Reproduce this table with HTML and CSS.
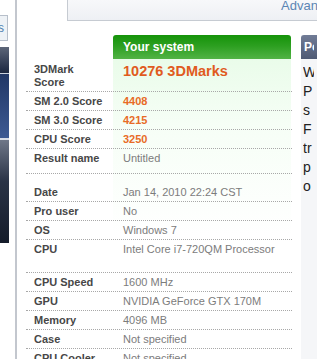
FILE: index.html
```html
<!DOCTYPE html>
<html>
<head>
<meta charset="utf-8">
<link rel="stylesheet" href="styles.css">
</head>
<body>
<div class="page">
  <div class="leftnav">
    <div class="navtab"><span>Results</span></div>
    <div class="navpanel">
      <div class="np-top"></div>
      <div class="np-mid"></div>
      <div class="np-bot"></div>
    </div>
  </div>
  <div class="main">
    <div class="topbar"><span class="toplink">Advanced search</span></div>
    <div class="content">
      <div class="results">
        <div class="row head">
          <div class="lab"></div>
          <div class="val"><div class="green">Your system</div></div>
        </div>
        <div class="row first">
          <div class="lab">3DMark<br>Score</div>
          <div class="val big">10276 3DMarks</div>
        </div>
        <div class="row">
          <div class="lab">SM 2.0 Score</div>
          <div class="val score">4408</div>
        </div>
        <div class="row">
          <div class="lab">SM 3.0 Score</div>
          <div class="val score">4215</div>
        </div>
        <div class="row">
          <div class="lab">CPU Score</div>
          <div class="val score">3250</div>
        </div>
        <div class="row resname">
          <div class="lab">Result name</div>
          <div class="val">Untitled</div>
        </div>
        <div class="row date">
          <div class="lab">Date</div>
          <div class="val">Jan 14, 2010 22:24 CST</div>
        </div>
        <div class="row">
          <div class="lab">Pro user</div>
          <div class="val">No</div>
        </div>
        <div class="row">
          <div class="lab">OS</div>
          <div class="val">Windows 7</div>
        </div>
        <div class="row cpu">
          <div class="lab">CPU</div>
          <div class="val">Intel Core i7-720QM Processor</div>
        </div>
        <div class="row">
          <div class="lab">CPU Speed</div>
          <div class="val">1600 MHz</div>
        </div>
        <div class="row">
          <div class="lab">GPU</div>
          <div class="val">NVIDIA GeForce GTX 170M</div>
        </div>
        <div class="row">
          <div class="lab">Memory</div>
          <div class="val">4096 MB</div>
        </div>
        <div class="row">
          <div class="lab">Case</div>
          <div class="val">Not specified</div>
        </div>
        <div class="row">
          <div class="lab">CPU Cooler</div>
          <div class="val">Not specified</div>
        </div>
      </div>
      <div class="side">
        <div class="side-head"><span class="head-text">Popular</span></div>
        <div class="side-body">
          <div class="line">What is</div>
          <div class="line">P results</div>
          <div class="line">s scores</div>
          <div class="line">F marks</div>
          <div class="line">tr scores</div>
          <div class="line">p tests</div>
          <div class="line">o online</div>
        </div>
      </div>
    </div>
  </div>
</div>
</body>
</html>
```

FILE: styles.css
```css
html, body {
  margin: 0;
  padding: 0;
  background: #fff;
}
body {
  width: 317px;
  height: 359px;
  overflow: hidden;
  font-family: "Liberation Sans", Arial, sans-serif;
}
.page {
  display: flex;
  height: 359px;
  overflow: hidden;
}
.leftnav {
  width: 15px;
  flex-shrink: 0;
  border-right: 2px solid #c3c7ce;
  display: flex;
  flex-direction: column;
}
.navtab {
  flex-shrink: 0;
  margin-top: 15px;
  width: 7px;
  height: 24px;
  border: 1px solid #b7bfca;
  border-left: none;
  background: #eef2f6;
  overflow: hidden;
  display: flex;
  justify-content: flex-end;
  align-items: center;
}
.navtab span {
  font-size: 12px;
  color: #4f7fb0;
  white-space: nowrap;
  padding-right: 3px;
}
.navpanel {
  flex-shrink: 0;
  margin-top: 6px;
  width: 9px;
  display: flex;
  flex-direction: column;
}
.np-top {
  flex-shrink: 0;
  height: 26px;
  background: linear-gradient(#5d6679, #1b2640);
  border-bottom: 1px solid #c9d0dc;
}
.np-mid {
  flex-shrink: 0;
  height: 64px;
  background: linear-gradient(#213766, #3d5a93);
  border-bottom: 2px solid #d8dde6;
}
.np-bot {
  flex-shrink: 0;
  height: 103px;
  background: linear-gradient(#6f7788, #2a3346 40%, #151c2a);
}
.main {
  flex: 1;
  display: flex;
  flex-direction: column;
  min-width: 0;
}
.topbar {
  flex-shrink: 0;
  margin-left: 50px;
  height: 20px;
  border-left: 1px solid #c6cbd2;
  border-bottom: 1px solid #c6cbd2;
  background: linear-gradient(#f7f8fa, #eef0f4);
  overflow: hidden;
  white-space: nowrap;
}
.toplink {
  display: block;
  padding-left: 213px;
  margin-top: -2px;
  font-size: 13px;
  line-height: 15px;
  color: #5b85b4;
}
.content {
  flex-shrink: 0;
  display: flex;
  margin-top: 14px;
  padding-left: 9px;
}
.results {
  width: 266px;
  flex-shrink: 0;
  background-image: linear-gradient(#e5fbe5, #f6fef6 90px, #ffffff 200px);
  background-size: 178px 100%;
  background-position: 87px 0;
  background-repeat: no-repeat;
}
.row {
  display: flex;
  border-bottom: 1px dotted #a8a8a8;
  padding: 2px 0;
  font-size: 11px;
  line-height: 14px;
}
.lab {
  width: 79px;
  padding-left: 8px;
  flex-shrink: 0;
  font-weight: bold;
  color: #474747;
}
.val {
  flex: 1;
  padding-left: 10px;
  color: #7c7c7c;
  white-space: nowrap;
}
.row.head {
  border-bottom: none;
  padding: 0;
  height: 24px;
  background: #fff;
}
.row.head .val {
  padding-left: 0;
  padding-right: 1px;
  display: flex;
}
.green {
  flex: 1;
  border-radius: 3px 3px 0 0;
  background: linear-gradient(#159309, #2c9f20 45%, #52b345);
  color: #fff;
  font-weight: bold;
  font-size: 12px;
  line-height: 24px;
  padding-left: 10px;
}
.row.first {
  padding: 4px 0 2px;
  line-height: 13px;
}
.big {
  font-size: 14.5px;
  line-height: 17px;
  font-weight: bold;
  color: #e05b1e;
}
.score {
  font-weight: bold;
  color: #e86b26;
}
.row.resname {
  padding-bottom: 8px;
}
.row.date {
  padding-top: 11px;
}
.row.cpu {
  padding-bottom: 16px;
}
.side {
  margin-left: 9px;
  width: 160px;
  flex-shrink: 0;
  height: 330px;
  background: #f5f6f8;
}
.side-head {
  height: 24px;
  line-height: 24px;
  border-radius: 3px 3px 0 0;
  background: linear-gradient(#717c96, #4f5a74);
  color: #fff;
  font-weight: bold;
  font-size: 12px;
  padding-left: 3px;
}
.head-text {
  display: block;
  width: 10px;
  overflow: hidden;
  white-space: nowrap;
}
.side-body {
  padding: 4px 0 0 2px;
  font-size: 14px;
  line-height: 19px;
  color: #222;
  white-space: nowrap;
}
.line {
  width: 11px;
  overflow: hidden;
}
```
